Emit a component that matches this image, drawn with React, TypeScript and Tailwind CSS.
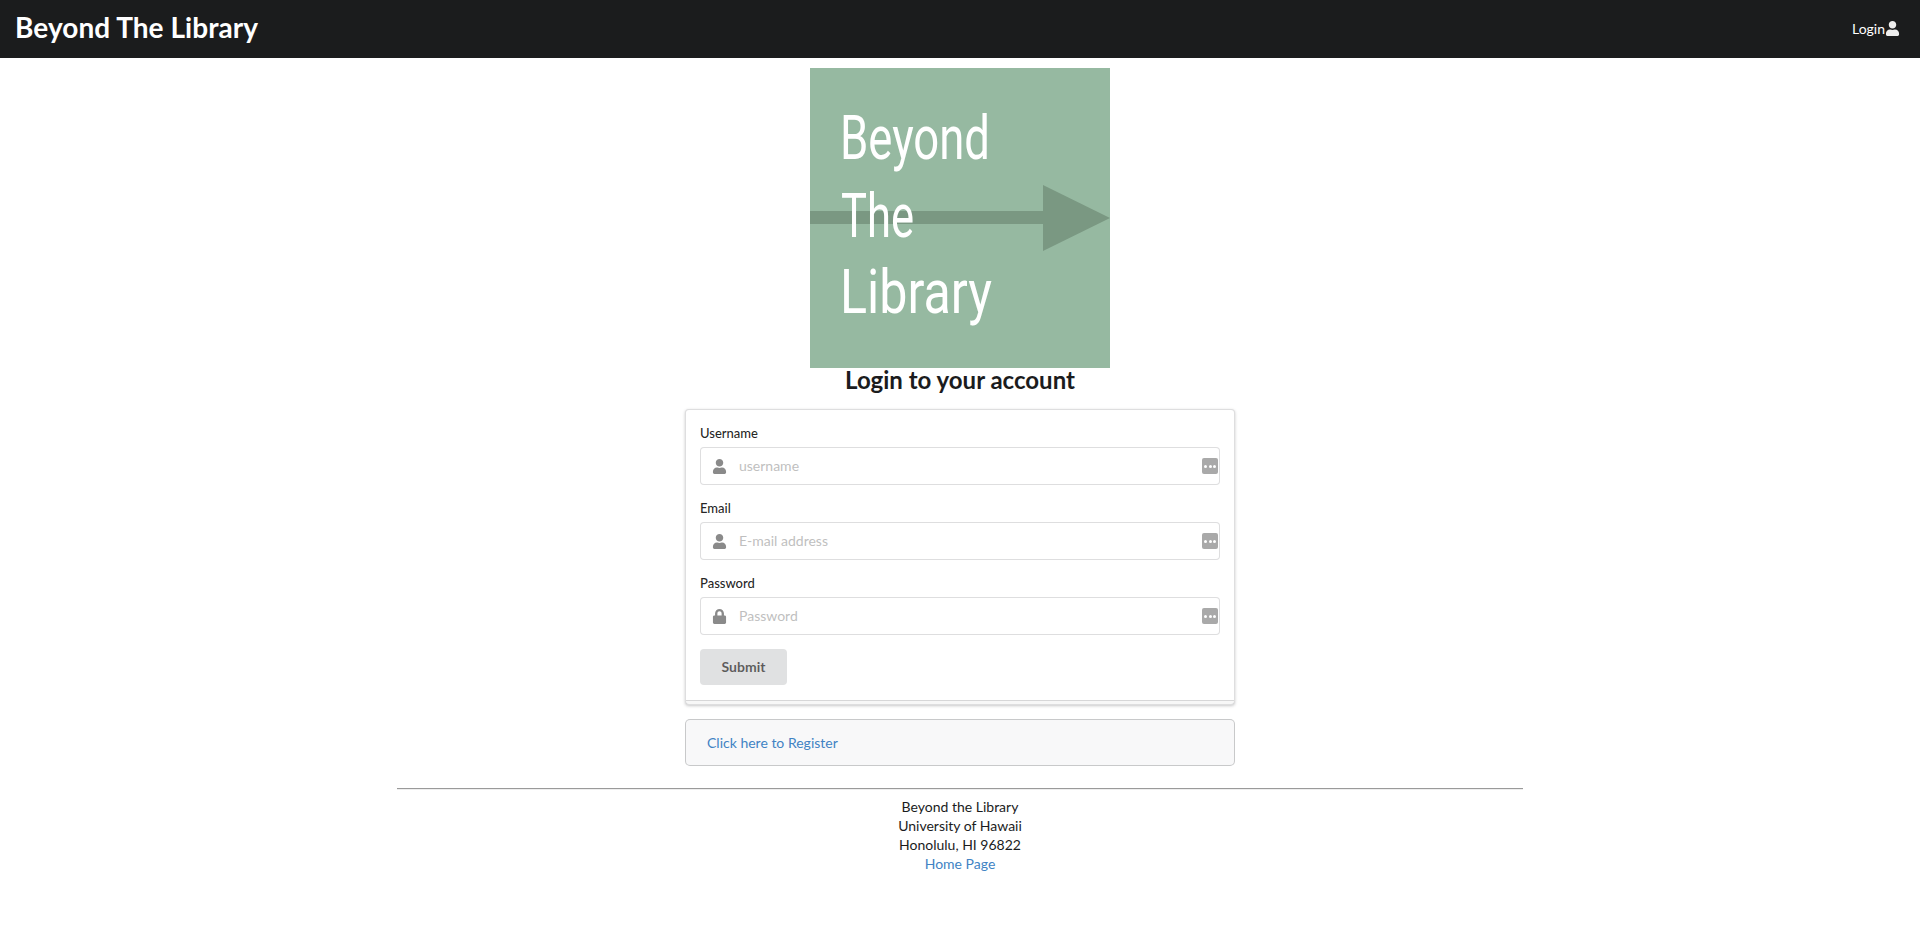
import { FaLock, FaUser } from 'react-icons/fa'

// Drawn version of the logo picture
function Logo() {
  return (
    <svg width="300" height="300" viewBox="0 0 300 300" className="block shrink-0">
      <rect width="300" height="300" fill="#96b9a1" />
      <rect x="0" y="143" width="233" height="13" fill="#7a9882" />
      <polygon points="233,117 300,150 233,183" fill="#7a9882" />
      <g fill="#ffffff" fontFamily="Roboto, sans-serif" fontWeight="400" fontSize="62">
        <text x="30" y="91" textLength="150" lengthAdjust="spacingAndGlyphs">Beyond</text>
        <text x="31" y="169" textLength="73" lengthAdjust="spacingAndGlyphs">The</text>
        <text x="30" y="245" textLength="152" lengthAdjust="spacingAndGlyphs">Library</text>
      </g>
    </svg>
  )
}

function Field({ label, placeholder, lock }: { label: string; placeholder: string; lock?: boolean }) {
  return (
    <div className="mb-[14px]">
      <label className="block mb-[4px] text-[13px] leading-[19px] font-medium text-[#000000de]">{label}</label>
      <div className="relative">
        <span className="absolute left-[12px] top-0 h-[38px] flex items-center text-[#8a8a8a]">
          {lock ? <FaLock className="w-[15px] h-[15px]" /> : <FaUser className="w-[15px] h-[15px]" />}
        </span>
        <input
          placeholder={placeholder}
          className="block w-full h-[38px] pl-[38px] pr-[14px] pb-[2px] bg-white border border-[#22242626] rounded-[4px] text-[14px] placeholder:text-[#bfbfbf] outline-none"
        />
        <span className="absolute right-[2px] top-[11px] w-[16px] h-[16px] rounded-[2px] bg-[#a9a9a9] flex items-center justify-center gap-[1.5px]">
          <i className="w-[3px] h-[3px] rounded-full bg-white" />
          <i className="w-[3px] h-[3px] rounded-full bg-white" />
          <i className="w-[3px] h-[3px] rounded-full bg-white" />
        </span>
      </div>
    </div>
  )
}

export default function App() {
  return (
    <div className="min-h-[937px] bg-white text-[14px] text-[#000000de] font-['Lato','Open_Sans',sans-serif]">
      <nav className="h-[58px] bg-[#1b1c1d] flex items-center justify-between pl-[15px] pr-[20px] text-white">
        <a className="text-[28px] font-bold leading-[54px] pb-[4px] tracking-[0.05px]">Beyond The Library</a>
        <a className="flex items-center text-[14px] pb-[2px] -ml-[1px]">
          Login
          <FaUser className="w-[15px] h-[15px] text-[#eeeeee]" />
        </a>
      </nav>

      <main className="flex flex-col items-center pt-[10px]">
        <Logo />
        <h2 className="text-[24px] leading-[24px] pb-[2px] font-bold text-[#1b1c1d] text-center">Login to your account</h2>

        <div className="w-[550px] mt-[15px]">
          <form className="relative bg-white border border-[#22242626] rounded-[4px] shadow-[0_1px_3px_0_#22242640] px-[14px] pt-[14px] h-[296px] after:absolute after:left-0 after:bottom-0 after:w-full after:h-[4px] after:bg-[#00000008] after:border-t after:border-[#22242626]">
            <Field label="Username" placeholder="username" />
            <Field label="Email" placeholder="E-mail address" />
            <Field label="Password" placeholder="Password" lock />
            <button type="button" className="w-[87px] h-[36px] pb-[2px] rounded-[4px] bg-[#e0e1e2] text-[14px] font-bold text-[#00000099]">
              Submit
            </button>
          </form>

          <div className="mt-[14px] h-[47px] flex items-center px-[21px] bg-[#f8f8f9] border border-[#22242638] rounded-[5px] text-[#4183c4]">
            <a>Click here to Register</a>
          </div>
        </div>

        <footer className="w-[1126px] mt-[22px] text-center leading-[19px] text-[#1b1c1d]">
          <hr className="h-[2px] mb-[7px] border-t border-b border-t-[#9a9a9a] border-b-[#eeeeee]" />
          <div>Beyond the Library</div>
          <div>University of Hawaii</div>
          <div>Honolulu, HI 96822</div>
          <a className="text-[#4183c4]">Home Page</a>
        </footer>
      </main>
    </div>
  )
}
